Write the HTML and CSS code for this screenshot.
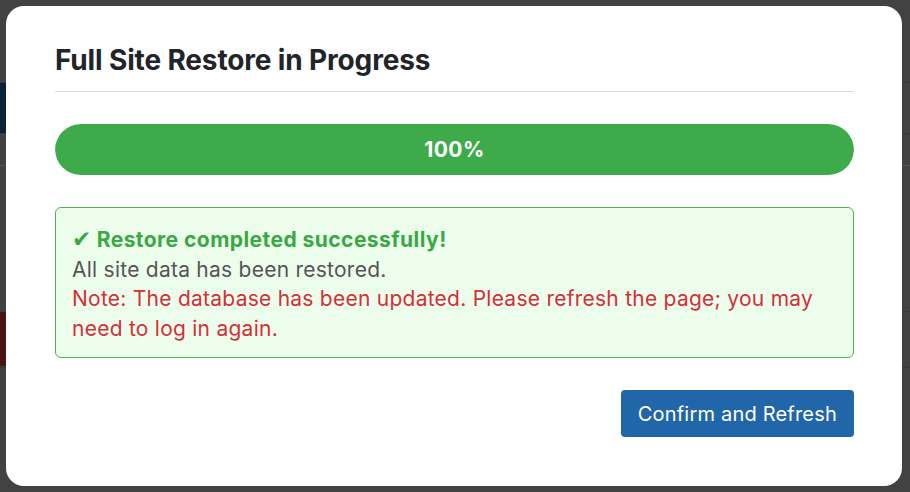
FILE: index.html
```html
<!DOCTYPE html>
<html lang="en">
<head>
<meta charset="utf-8">
<title>Full Site Restore in Progress</title>
<link rel="stylesheet" href="styles.css">
</head>
<body>
<div class="page">
  <div class="page-row row-a"></div>
  <div class="page-row row-b"><span class="chip-blue"></span></div>
  <div class="page-row row-c"></div>
  <div class="page-row row-d"></div>
  <div class="page-row row-e"><span class="chip-red"></span></div>
  <div class="page-row row-f"></div>
</div>
<div class="overlay">
  <div class="modal" role="dialog" aria-labelledby="modal-title">
    <div class="modal-header">
      <h2 id="modal-title" class="modal-title">Full Site Restore in Progress</h2>
    </div>
    <div class="modal-body">
      <div class="progress">
        <div class="progress-bar" style="width: 100%">100%</div>
      </div>
      <div class="alert-success">
        <div class="alert-title"><span class="check">✔</span> Restore completed successfully!</div>
        <div class="alert-text">All site data has been restored.</div>
        <div class="alert-note">Note: The database has been updated. Please refresh the page; you may need to log in again.</div>
      </div>
    </div>
    <div class="modal-footer">
      <button class="btn-primary" type="button">Confirm and Refresh</button>
    </div>
  </div>
</div>
</body>
</html>
```
FILE: styles.css
```css
* { box-sizing: border-box; }

html, body {
  margin: 0;
  padding: 0;
  height: 100%;
}

body {
  background: #424242;
  font-family: Inter, "Noto Sans", "Liberation Sans", sans-serif;
  overflow: hidden;
}

.page {
  display: flex;
  flex-direction: column;
}

.page-row {
  border-bottom: 1px solid #3a3a3a;
}

.row-a { height: 83px; }
.row-b { height: 51px; }
.row-c { height: 32px; border-bottom-color: #555; }
.row-d { height: 146px; }
.row-e { height: 55px; }

.chip-blue {
  display: block;
  width: 6px;
  height: 100%;
  background: #0c2236;
}

.chip-red {
  display: block;
  width: 6px;
  height: 100%;
  background: #4a1414;
}

.overlay {
  position: fixed;
  inset: 0;
  padding: 6px 8px 6px 6px;
  display: flex;
}

.modal {
  flex: 1;
  background: #ffffff;
  border-radius: 18px;
  padding: 0 48px 0 49px;
  display: flex;
  flex-direction: column;
}

.modal-header {
  padding-top: 37px;
  padding-bottom: 14px;
  border-bottom: 1px solid #dcdcdc;
}

.modal-title {
  margin: 0;
  font-size: 28px;
  line-height: 34px;
  font-weight: 700;
  color: #212529;
  letter-spacing: -0.15px;
}

.modal-body {
  padding-top: 32px;
}

.progress {
  height: 51px;
  border-radius: 26px;
  background: #e9ecef;
  overflow: hidden;
  display: flex;
}

.progress-bar {
  background: #3dab4a;
  color: #ffffff;
  font-weight: 700;
  font-size: 21px;
  letter-spacing: 0.4px;
  display: flex;
  align-items: center;
  justify-content: center;
  border-radius: 26px;
}

.alert-success {
  margin-top: 32px;
  background: #edfdec;
  border: 1px solid #4fb152;
  border-radius: 6px;
  padding: 17px 16px 14px;
  font-size: 21px;
  line-height: 29.5px;
  letter-spacing: 0.25px;
}

.alert-title {
  color: #3aa845;
  font-weight: 700;
  letter-spacing: 0.45px;
}

.check {
  font-family: "DejaVu Sans", sans-serif;
  font-size: 23px;
  line-height: 1;
  letter-spacing: 0;
}

.alert-text {
  color: #555555;
}

.alert-note {
  color: #d3303a;
}

.modal-footer {
  display: flex;
  justify-content: flex-end;
  padding-top: 32px;
}

.btn-primary {
  background: #2166a8;
  color: #ffffff;
  border: none;
  border-radius: 4px;
  font-family: inherit;
  font-size: 20px;
  letter-spacing: 0.2px;
  height: 47px;
  padding: 0 17px;
  cursor: pointer;
}
```
